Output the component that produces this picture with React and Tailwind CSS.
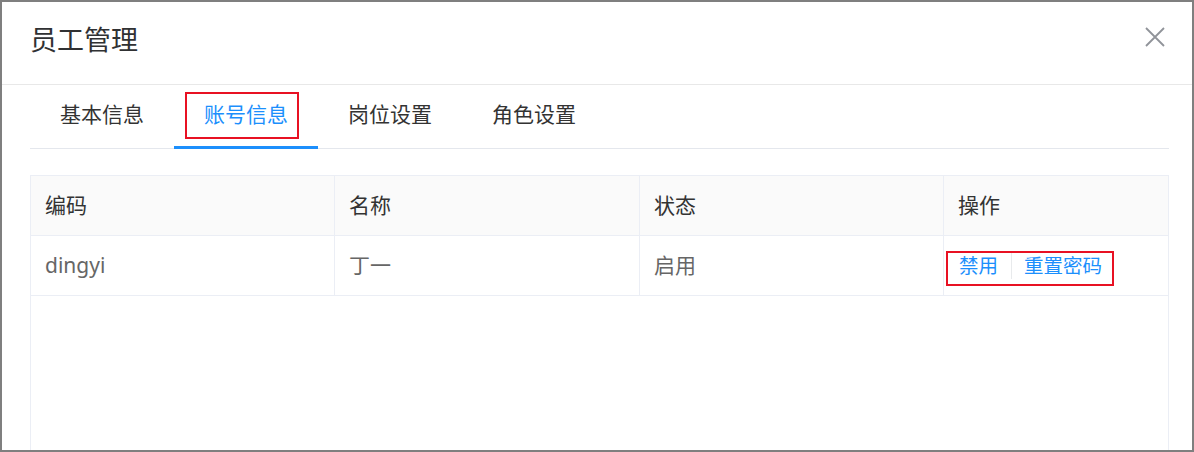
import React from "react";

const font = { fontFamily: '"Noto Sans", "Noto Sans CJK SC", sans-serif' };

function Tab({ label, active, annotate }) {
  return (
    <div
      className={`relative -mb-px flex h-[64px] w-[144px] items-center justify-center border-b-[3px] pb-[2px] text-[21px] ${
        active ? "border-[#1c8ffc] text-[#1c8ffc]" : "border-transparent text-[#333333]"
      }`}
    >
      <span className="leading-none">{label}</span>
      {annotate && (
        <span className="pointer-events-none absolute left-[11px] top-[7px] h-[47px] w-[114px] border-2 border-[#e81123]" />
      )}
    </div>
  );
}

function Cell({ children, last, className = "" }) {
  return (
    <div
      className={`relative flex items-center pl-[14px] ${last ? "" : "border-r border-[#ebeef5]"} ${className}`}
    >
      {children}
    </div>
  );
}

export default function App() {
  return (
    <div
      style={font}
      className="flex h-[452px] w-[1194px] flex-col overflow-hidden border-2 border-[#7f7f7f] bg-white"
    >
      {/* Header */}
      <div className="flex h-[83px] shrink-0 items-start justify-between border-b border-[#e8e8e8] pl-[28px] pr-[27px]">
        <h1 className="mt-[20px] text-[27px] leading-[36px] text-[#303133]">员工管理</h1>
        <button className="mt-[25px] text-[#909399]" aria-label="close">
          <svg width="20" height="20" viewBox="0 0 20 20" fill="none" stroke="currentColor" strokeWidth="1.8">
            <path d="M1 1 L19 19 M19 1 L1 19" />
          </svg>
        </button>
      </div>

      {/* Body */}
      <div className="flex flex-1 flex-col pl-[28px] pr-[23px]">
        <div className="flex border-b border-[#e4e7ed]">
          <Tab label="基本信息" />
          <Tab label="账号信息" active annotate />
          <Tab label="岗位设置" />
          <Tab label="角色设置" />
        </div>

        <div className="mt-[26px] flex flex-1 flex-col border-x border-t border-[#ebeef5]">
          <div className="grid h-[60px] grid-cols-[304px_305px_304px_1fr] border-b border-[#ebeef5] bg-[#fafafa] text-[21px] text-[#333333]">
            <Cell>编码</Cell>
            <Cell>名称</Cell>
            <Cell>状态</Cell>
            <Cell last>操作</Cell>
          </div>
          <div className="grid h-[60px] grid-cols-[304px_305px_304px_1fr] border-b border-[#ebeef5] text-[21px] text-[#666666]">
            <Cell>dingyi</Cell>
            <Cell>丁一</Cell>
            <Cell>启用</Cell>
            <Cell last>
              <div className="flex items-center pl-[1px] text-[19.5px] text-[#1c8ffc]">
                <span className="border-r border-[#e8eaec] pr-[13px] leading-[26px]">禁用</span>
                <span className="pl-[12px] leading-[26px]">重置密码</span>
              </div>
              <span className="pointer-events-none absolute left-[2px] top-[15px] h-[35px] w-[168px] border-2 border-[#e81123]" />
            </Cell>
          </div>
          <div className="flex-1" />
        </div>
      </div>
    </div>
  );
}
